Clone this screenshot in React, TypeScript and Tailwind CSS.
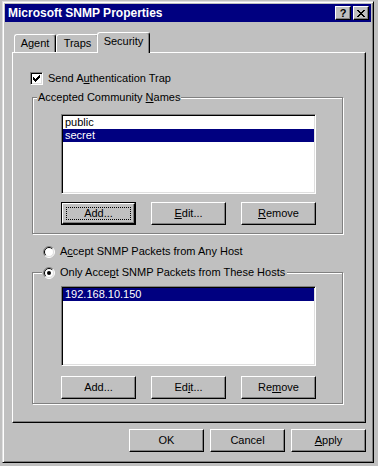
import React from "react";

const raised =
  "border border-t-white border-l-white border-r-black border-b-black shadow-[inset_-1px_-1px_0_#808080]";
const sunken =
  "border border-t-[#808080] border-l-[#808080] border-r-white border-b-white shadow-[inset_1px_1px_0_#000,inset_-1px_-1px_0_#dfdfdf]";
const etched = "border border-[#808080] shadow-[inset_1px_1px_0_#fff,1px_1px_0_#fff]";

function Btn({ children, focus = false }: { children: React.ReactNode; focus?: boolean }) {
  if (focus) {
    return (
      <div className="w-[75px] h-[23px] border border-black">
        <div className={`relative h-full flex items-center justify-center ${raised}`}>
          <span className="absolute inset-[3px] border border-dotted border-black" />
          {children}
        </div>
      </div>
    );
  }
  return (
    <div className={`w-[75px] h-[23px] flex items-center justify-center ${raised}`}>{children}</div>
  );
}

function U({ children }: { children: React.ReactNode }) {
  return <span className="underline underline-offset-1">{children}</span>;
}

function ListBox({ items, selected }: { items: string[]; selected: number }) {
  return (
    <div className={`w-[255px] h-[80px] bg-white p-[1px] ${sunken}`}>
      {items.map((t, i) => (
        <div
          key={t}
          className={`h-[13px] leading-[13px] pl-[2px] ${i === selected ? "bg-[#000080] text-white" : ""}`}
        >
          {t}
        </div>
      ))}
    </div>
  );
}

function Radio({ checked }: { checked: boolean }) {
  return (
    <svg width="12" height="12" viewBox="0 0 12 12" className="shrink-0">
      <circle cx="6" cy="6" r="5" fill="#fff" />
      <path d="M2.1 9.9 A5.5 5.5 0 0 1 9.9 2.1" fill="none" stroke="#808080" />
      <path d="M9.9 2.1 A5.5 5.5 0 0 1 2.1 9.9" fill="none" stroke="#fff" />
      <path d="M2.8 9.2 A4.5 4.5 0 0 1 9.2 2.8" fill="none" stroke="#000" />
      <path d="M9.2 2.8 A4.5 4.5 0 0 1 2.8 9.2" fill="none" stroke="#dfdfdf" />
      {checked && <circle cx="6" cy="6" r="2" fill="#000" />}
    </svg>
  );
}

function Check() {
  // pixel checkmark, 7x7
  const rows: [number, number, number][] = [
    [6, 0, 1], [5, 1, 2], [0, 2, 1], [4, 2, 3], [0, 3, 2], [3, 3, 3], [0, 4, 5], [1, 5, 3], [2, 6, 1],
  ];
  return (
    <svg width="7" height="7" viewBox="0 0 7 7" shapeRendering="crispEdges">
      {rows.map(([x, y, w], i) => (
        <rect key={i} x={x} y={y} width={w} height="1" fill="#000" />
      ))}
    </svg>
  );
}

function Tab({ label, active = false, w }: { label: string; active?: boolean; w: string }) {
  return (
    <div
      className={`${w} flex items-center justify-center rounded-t-[3px] border-l border-t border-r border-l-white border-t-white border-r-black shadow-[inset_-1px_0_0_#808080] bg-[#c0c0c0] ${
        active ? "relative z-10 h-[21px] -mb-[1px] -ml-[2px] pb-[3px]" : "h-[18px]"
      }`}
    >
      {label}
    </div>
  );
}

export default function App() {
  return (
    <div className="w-[378px] h-[466px] bg-[#c0c0c0] pl-[2px] pt-[1px] text-[11px] text-black font-['Liberation_Sans',Arial,sans-serif]">
      <div className="w-[372px] h-[462px] p-[2px] border border-t-[#dfdfdf] border-l-[#dfdfdf] border-r-black border-b-black shadow-[inset_1px_1px_0_#fff,inset_-1px_-1px_0_#808080]">
        {/* title bar */}
        <div className="h-[18px] bg-[#000080] flex items-center justify-between pl-[3px] pr-[2px]">
          <span className="text-white font-bold text-[12px]">Microsoft SNMP Properties</span>
          <div className="flex gap-[2px]">
            <div className={`w-[16px] h-[14px] flex items-center justify-center bg-[#c0c0c0] font-bold text-[11px] leading-none ${raised}`}>
              ?
            </div>
            <div className={`w-[16px] h-[14px] flex items-center justify-center bg-[#c0c0c0] ${raised}`}>
              <svg width="8" height="7" viewBox="0 0 8 7" shapeRendering="crispEdges">
                <path d="M0 0h2v1h-2zM6 0h2v1h-2zM1 1h2v1h-2zM5 1h2v1h-2zM2 2h4v1h-4zM3 3h2v1h-2zM2 4h4v1h-4zM1 5h2v1h-2zM5 5h2v1h-2zM0 6h2v1h-2zM6 6h2v1h-2z" fill="#000" />
              </svg>
            </div>
          </div>
        </div>

        {/* tabs */}
        <div className="ml-[7px] mt-[10px] w-[354px]">
          <div className="flex items-end h-[20px] pl-[2px]">
            <Tab label="Agent" w="w-[42px]" />
            <Tab label="Traps" w="w-[43px]" />
            <Tab label="Security" w="w-[53px]" active />
          </div>

          <div className="w-[354px] h-[371px] border border-t-white border-l-white border-r-black border-b-black shadow-[inset_-1px_-1px_0_#808080] flex flex-col">
            {/* checkbox */}
            <div className="mt-[19px] ml-[17px] h-[13px] flex items-center gap-[5px]">
              <div className={`w-[13px] h-[13px] bg-white flex items-center justify-center ${sunken}`}>
                <Check />
              </div>
              <span>
                Send A<U>u</U>thentication Trap
              </span>
            </div>

            {/* group 1 */}
            <div className={`relative mt-[12px] ml-[19px] w-[311px] h-[137px] shrink-0 ${etched}`}>
              <span className="absolute left-[4px] -top-[7px] bg-[#c0c0c0] px-[1px] leading-[13px]">
                Accepted Community <U>N</U>ames
              </span>
              <div className="ml-[28px] mt-[16px]">
                <ListBox items={["public", "secret"]} selected={1} />
                <div className="mt-[8px] flex gap-[15px]">
                  <Btn focus>Add...</Btn>
                  <Btn>
                    <span>
                      <U>E</U>dit...
                    </span>
                  </Btn>
                  <Btn>
                    <span>
                      <U>R</U>emove
                    </span>
                  </Btn>
                </div>
              </div>
            </div>

            {/* radio 1 */}
            <div className="mt-[11px] ml-[30px] h-[13px] flex items-center gap-[5px]">
              <Radio checked={false} />
              <span>
                A<U>c</U>cept SNMP Packets from Any Host
              </span>
            </div>

            {/* group 2 */}
            <div className={`relative mt-[14px] ml-[19px] w-[311px] h-[132px] shrink-0 ${etched}`}>
              <div className="absolute left-[9px] -top-[7px] h-[13px] flex items-center gap-[5px] bg-[#c0c0c0] pl-[1px] pr-[2px]">
                <Radio checked />
                <span>
                  Only Acce<U>p</U>t SNMP Packets from These Hosts
                </span>
              </div>
              <div className="ml-[28px] mt-[13px]">
                <ListBox items={["192.168.10.150"]} selected={0} />
                <div className="mt-[10px] flex gap-[15px]">
                  <Btn>Add...</Btn>
                  <Btn>
                    <span>
                      Ed<U>i</U>t...
                    </span>
                  </Btn>
                  <Btn>
                    <span>
                      Re<U>m</U>ove
                    </span>
                  </Btn>
                </div>
              </div>
            </div>
          </div>

          {/* dialog buttons */}
          <div className="mt-[6px] flex justify-end gap-[6px]">
            <Btn>OK</Btn>
            <Btn>Cancel</Btn>
            <Btn>
              <span>
                <U>A</U>pply
              </span>
            </Btn>
          </div>
        </div>
      </div>
    </div>
  );
}
